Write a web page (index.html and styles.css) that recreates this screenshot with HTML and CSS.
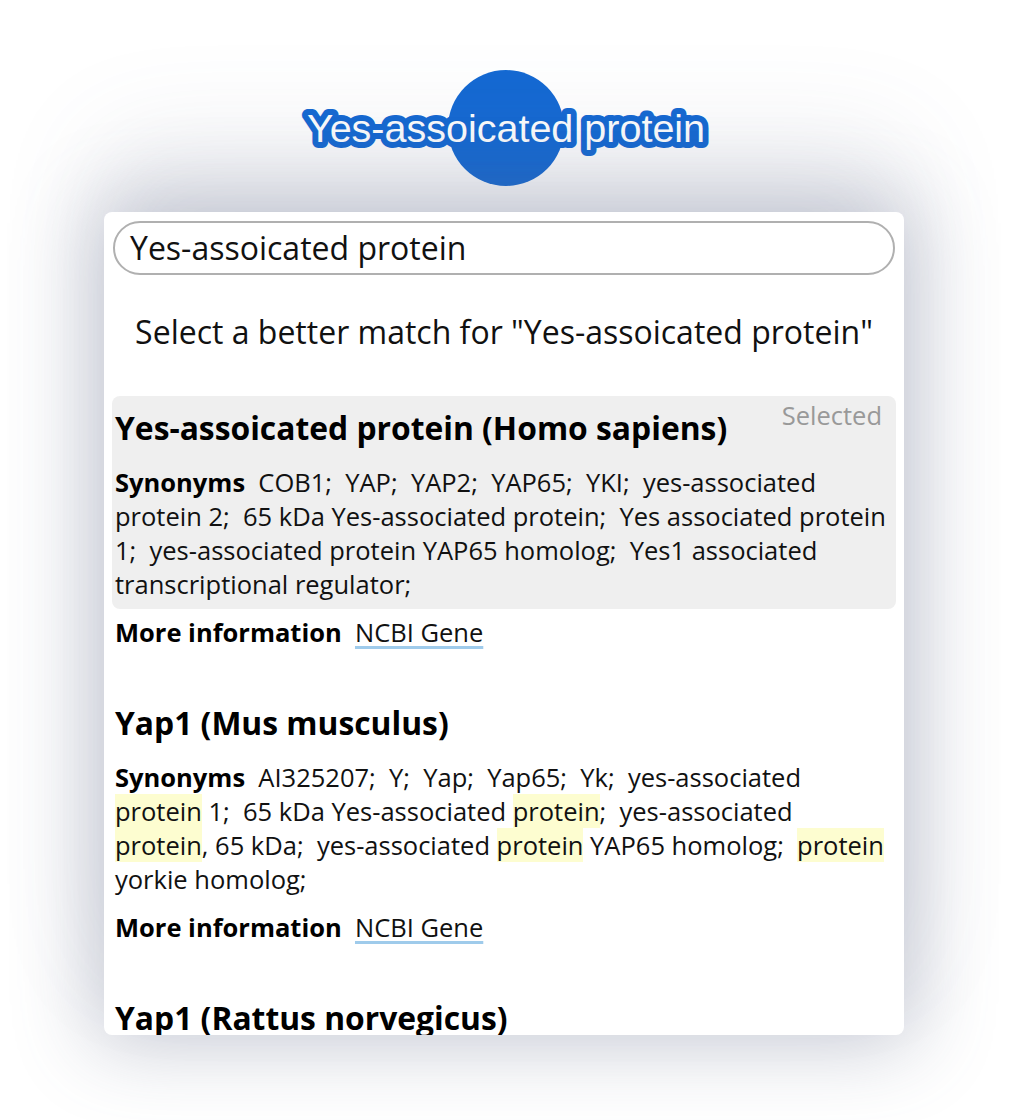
FILE: index.html
```html
<!DOCTYPE html>
<html>
<head>
<meta charset="utf-8">
<link rel="stylesheet" href="styles.css">
</head>
<body>
<div class="stage">
  <div class="node">
    <svg class="node-svg" width="440" height="130" viewBox="0 0 440 130">
      <circle cx="221" cy="64" r="58" fill="#1469d3"/>
      <text class="node-label" x="221" y="78" text-anchor="middle">Yes-assoicated protein</text>
    </svg>
  </div>
  <div class="panel">
    <div class="search">Yes-assoicated protein</div>
    <p class="prompt">Select a better match for "Yes-assoicated protein"</p>

    <div class="entry selected">
      <span class="badge">Selected</span>
      <h2 class="title">Yes-assoicated protein (Homo sapiens)</h2>
      <p class="syn"><b>Synonyms</b>&nbsp; COB1;&nbsp; YAP;&nbsp; YAP2;&nbsp; YAP65;&nbsp; YKI;&nbsp; yes-associated protein 2;&nbsp; 65 kDa Yes-associated protein;&nbsp; Yes associated protein 1;&nbsp; yes-associated protein YAP65 homolog;&nbsp; Yes1 associated transcriptional regulator;</p>
    </div>
    <p class="more"><b>More information</b>&nbsp; <span class="link">NCBI Gene</span></p>

    <div class="entry">
      <h2 class="title">Yap1 (Mus musculus)</h2>
      <p class="syn"><b>Synonyms</b>&nbsp; AI325207;&nbsp; Y;&nbsp; Yap;&nbsp; Yap65;&nbsp; Yk;&nbsp; yes-associated <mark>protein</mark> 1;&nbsp; 65 kDa Yes-associated <mark>protein</mark>;&nbsp; yes-associated <mark>protein</mark>, 65 kDa;&nbsp; yes-associated <mark>protein</mark> YAP65 homolog;&nbsp; <mark>protein</mark> yorkie homolog;</p>
    </div>
    <p class="more"><b>More information</b>&nbsp; <span class="link">NCBI Gene</span></p>

    <div class="entry">
      <h2 class="title">Yap1 (Rattus norvegicus)</h2>
    </div>
  </div>
</div>
</body>
</html>
```

FILE: styles.css
```css
html, body {
  margin: 0;
  padding: 0;
  background: #ffffff;
}

body {
  width: 1010px;
  height: 1120px;
  overflow: hidden;
  font-family: "Open Sans", "Noto Sans", sans-serif;
  color: #111;
}

.stage {
  position: relative;
  display: flex;
  flex-direction: column;
  align-items: center;
}

.node {
  height: 212px;
  width: 100%;
  display: flex;
  justify-content: center;
  align-items: flex-start;
}

.node-svg {
  margin-top: 64px;
  overflow: visible;
}

.node-label {
  font-family: "Liberation Sans", Arial, sans-serif;
  font-size: 39.5px;
  fill: #ffffff;
  stroke: #1469d3;
  stroke-width: 12px;
  stroke-linejoin: round;
  paint-order: stroke fill;
}

.panel {
  position: relative;
  width: 800px;
  height: 823px;
  margin-left: -2px;
  box-sizing: border-box;
  padding: 9px 8px 0 8px;
  background: #fff;
  border-radius: 8px;
  box-shadow: 0 0 80px 12px rgba(90, 100, 130, 0.32), 0 -70px 110px rgba(90, 100, 130, 0.12);
  overflow: hidden;
}

.panel::before {
  content: "";
  position: absolute;
  top: -14px;
  left: 387px;
  border-left: 14px solid transparent;
  border-right: 14px solid transparent;
  border-bottom: 14px solid #fff;
}

.search {
  height: 54px;
  box-sizing: border-box;
  margin: 0 1px;
  border: 2px solid #b0b0b0;
  border-radius: 27px;
  padding-left: 15px;
  font-size: 32px;
  line-height: 49px;
  color: #111;
}

.prompt {
  margin: 37px 0 0 0;
  font-size: 32px;
  line-height: 40px;
  text-align: center;
}

.entry {
  position: relative;
  margin-top: 44px;
  padding: 12px 4px 8px 3px;
  border-radius: 8px;
}

.entry.selected {
  background: #efefef;
}

.entry + .more + .entry {
  margin-top: 42px;
}

.badge {
  position: absolute;
  top: 2px;
  right: 14px;
  font-size: 25.5px;
  line-height: 34px;
  color: #999;
}

.title {
  margin: 0;
  font-size: 31.8px;
  line-height: 40px;
  font-weight: 700;
  color: #000;
}

.syn {
  margin: 17px 0 0 0;
  font-size: 25.5px;
  line-height: 34px;
  color: #111;
}

.syn b, .more b {
  font-weight: 700;
  color: #000;
}

mark {
  background: #fdfdd0;
  color: #111;
}

.more {
  margin: 6px 0 0 3px;
  font-size: 25.5px;
  line-height: 34px;
}

.link {
  color: #111;
  text-decoration: underline;
  text-decoration-color: #9fcbeb;
  text-decoration-thickness: 3px;
  text-underline-offset: 4px;
}
```
